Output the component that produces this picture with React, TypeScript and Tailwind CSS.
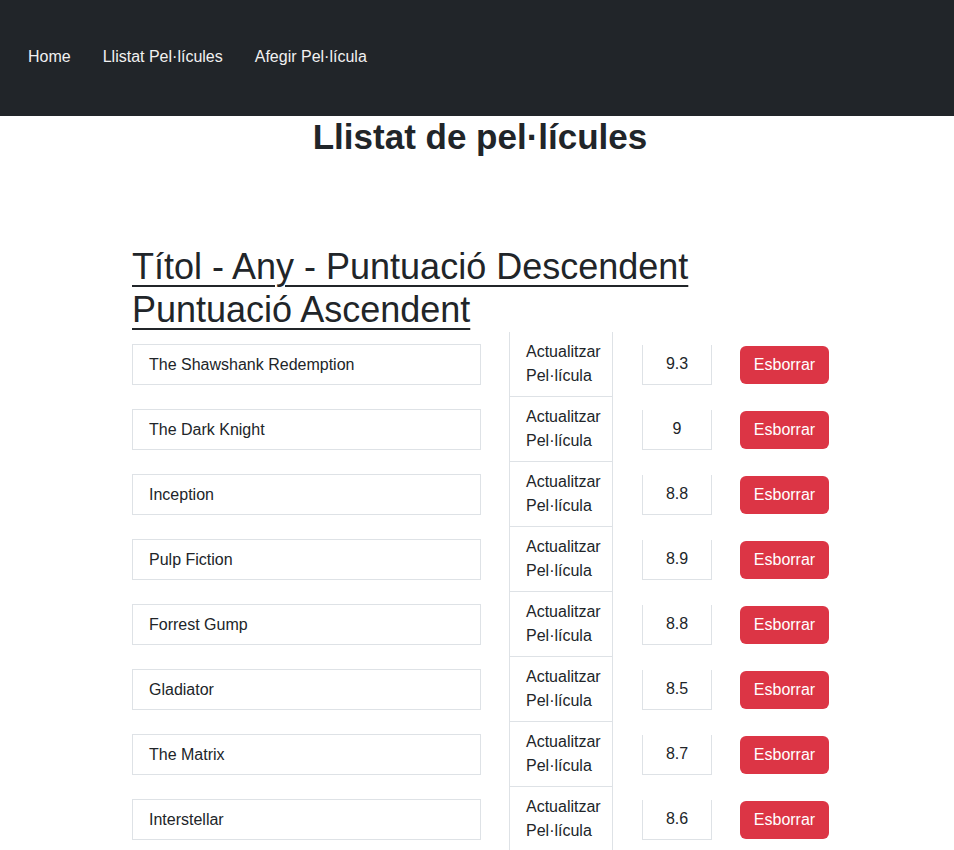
const movies = [
  { title: "The Shawshank Redemption", score: "9.3" },
  { title: "The Dark Knight", score: "9" },
  { title: "Inception", score: "8.8" },
  { title: "Pulp Fiction", score: "8.9" },
  { title: "Forrest Gump", score: "8.8" },
  { title: "Gladiator", score: "8.5" },
  { title: "The Matrix", score: "8.7" },
  { title: "Interstellar", score: "8.6" },
];

const navLinks = ["Home", "Llistat Pel·lícules", "Afegir Pel·lícula"];

const App = () => {
  return (
    <div className="min-h-screen bg-white text-[#212529] font-['Liberation_Sans',Arial,sans-serif]">
      <nav className="h-[116px] bg-[#212529] flex items-center px-3 pb-[2px]">
        {navLinks.map((label) => (
          <a key={label} href="#" className="px-4 text-[16px] text-[#f1f1f1]">
            {label}
          </a>
        ))}
      </nav>

      <h1 className="text-center text-[35px] leading-[1.2] font-bold mb-2 pl-[6px]">Llistat de pel·lícules</h1>

      <div className="w-[720px] mx-auto pl-[15px] mt-[87px]">
        <div className="text-[36px] leading-[1.2] font-light mb-[1px]">
          <a href="#" className="underline decoration-[2px] underline-offset-[6px] block w-fit">
            Títol - Any - Puntuació Descendent
          </a>
          <a href="#" className="underline decoration-[2px] underline-offset-[6px] block w-fit">
            Puntuació Ascendent
          </a>
        </div>

        <div className="flex flex-col">
          {movies.map((m) => (
            <div key={m.title} className="flex items-center h-[65px]">
              <div className="shrink-0 w-[349px] h-[41px] border border-[#dee2e6] flex items-center pl-4 text-[16px]">
                {m.title}
              </div>
              <div className="shrink-0 ml-[28px] w-[104px] h-full border-x border-b border-[#dee2e6] flex items-center pl-4 text-[16px] leading-6">
                Actualitzar
                <br />
                Pel·lícula
              </div>
              <div className="shrink-0 ml-[29px] w-[70px] h-[40px] border-x border-b border-[#dee2e6] flex items-center justify-center text-[16px]">
                {m.score}
              </div>
              <button className="shrink-0 ml-[28px] w-[89px] h-[38px] rounded-md bg-[#dc3545] text-white text-[16px]">
                Esborrar
              </button>
            </div>
          ))}
        </div>
      </div>
    </div>
  );
};

export default App;
